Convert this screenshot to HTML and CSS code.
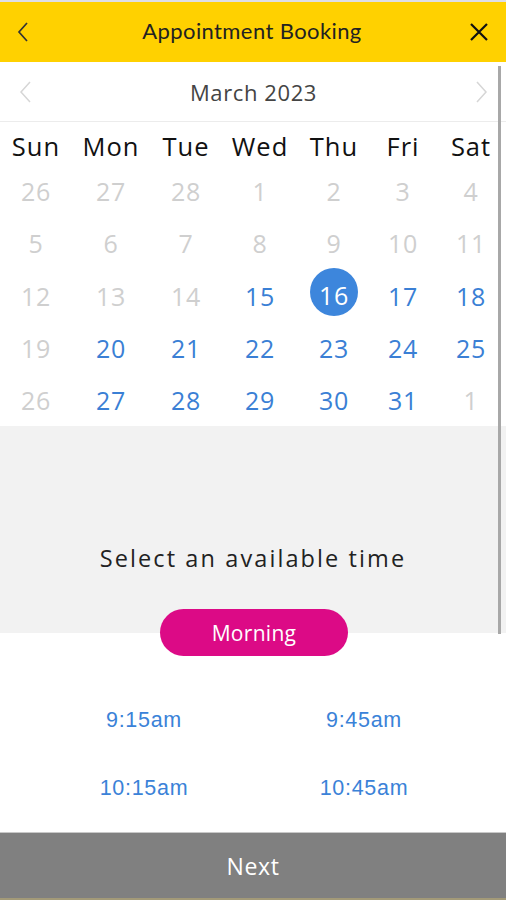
FILE: index.html
```html
<!DOCTYPE html>
<html>
<head>
<meta charset="utf-8">
<link rel="stylesheet" href="styles.css">
</head>
<body>
<div class="app">
  <div class="topline"></div>
  <header class="header">
    <span class="hicon back"><svg width="14" height="22" viewBox="0 0 14 22"><path d="M11 2 L3 11 L11 20" fill="none" stroke="#333" stroke-width="1.7"/></svg></span>
    <h1 class="title">Appointment Booking</h1>
    <span class="hicon close"><svg width="20" height="20" viewBox="0 0 20 20"><path d="M2 2 L18 18 M18 2 L2 18" fill="none" stroke="#111" stroke-width="2.2"/></svg></span>
  </header>
  <div class="month">
    <span class="mnav"><svg width="14" height="22" viewBox="0 0 14 22"><path d="M12 1 L3 11 L12 21" fill="none" stroke="#d6d6d6" stroke-width="1.5"/></svg></span>
    <span class="mlabel">March 2023</span>
    <span class="mnav"><svg width="14" height="22" viewBox="0 0 14 22"><path d="M2 1 L11 11 L2 21" fill="none" stroke="#d6d6d6" stroke-width="1.5"/></svg></span>
  </div>
  <div class="cal">
    <div class="wd">Sun</div><div class="wd">Mon</div><div class="wd">Tue</div><div class="wd">Wed</div><div class="wd">Thu</div><div class="wd">Fri</div><div class="wd">Sat</div>
    <div class="d off">26</div><div class="d off">27</div><div class="d off">28</div><div class="d off">1</div><div class="d off">2</div><div class="d off">3</div><div class="d off">4</div>
    <div class="d off">5</div><div class="d off">6</div><div class="d off">7</div><div class="d off">8</div><div class="d off">9</div><div class="d off">10</div><div class="d off">11</div>
    <div class="d off">12</div><div class="d off">13</div><div class="d off">14</div><div class="d on">15</div><div class="d sel"><span class="circle">16</span></div><div class="d on">17</div><div class="d on">18</div>
    <div class="d off">19</div><div class="d on">20</div><div class="d on">21</div><div class="d on">22</div><div class="d on">23</div><div class="d on">24</div><div class="d on">25</div>
    <div class="d off">26</div><div class="d on">27</div><div class="d on">28</div><div class="d on">29</div><div class="d on">30</div><div class="d on">31</div><div class="d off">1</div>
  </div>
  <section class="select">
    <p class="prompt">Select an available time</p>
  </section>
  <div class="pillrow"><span class="pill">Morning</span></div>
  <div class="times">
    <div class="t">9:15am</div><div class="t">9:45am</div>
    <div class="t">10:15am</div><div class="t">10:45am</div>
  </div>
  <footer class="next">Next</footer>
  <div class="scrollbar"></div>
</div>
</body>
</html>
```
FILE: styles.css
```css
html, body { margin: 0; padding: 0; }
body { background: #fff; font-family: "Open Sans", "Noto Sans", sans-serif; }
.app { position: relative; width: 506px; height: 900px; overflow: hidden; display: flex; flex-direction: column; }
.topline { height: 2px; background: #dedee6; }
.header { height: 60px; background: #ffd100; display: flex; align-items: center; justify-content: space-between; padding: 0 16px 0 12px; }
.hicon { display: flex; width: 22px; justify-content: center; }
.title { margin: 0 0 4px; font-family: Lato, "Open Sans", sans-serif; font-weight: 400; font-size: 22px; letter-spacing: 0.4px; color: #222; padding-left: 2px; }
.month { height: 59px; border-bottom: 1px solid #ececec; display: flex; align-items: center; justify-content: space-between; padding: 0 17px 0 18px; }
.mnav { display: flex; }
.mlabel { font-size: 22px; letter-spacing: 0.6px; color: #444; }
.cal { display: grid; grid-template-columns: 72px 78px 72px 76px 72px 66px 70px; grid-auto-rows: 52.25px; grid-template-rows: 43px; }
.wd { font-size: 25.5px; letter-spacing: 1px; color: #111; text-align: center; line-height: 36px; padding-top: 6px; }
.d { font-size: 25px; letter-spacing: 0.6px; text-align: center; display: flex; align-items: center; justify-content: center; }
.off { color: #cfcfcf; }
.on { color: #3a7fd5; }
.circle { width: 48px; height: 48px; border-radius: 50%; background: #3d86dc; color: #fff; display: flex; align-items: center; justify-content: center; margin-top: -8px; padding-top: 6px; box-sizing: border-box; }
.select { height: 207px; background: #f2f2f2; display: flex; align-items: flex-end; justify-content: center; }
.prompt { margin: 0 0 59px; font-size: 23.5px; letter-spacing: 2.1px; color: #222; }
.pillrow { display: flex; justify-content: center; margin-top: -24px; padding-left: 2px; }
.pill { width: 188px; height: 47px; border-radius: 24px; background: #dc0a86; color: #fff; font-size: 21px; letter-spacing: 0.3px; display: flex; align-items: center; justify-content: center; }
.times { display: grid; grid-template-columns: 220px 220px; grid-auto-rows: 68px; justify-content: center; padding: 30px 0 0 0; margin-left: 2px; }
.t { font-family: "Liberation Sans", Arial, sans-serif; font-size: 21.5px; letter-spacing: 0.7px; color: #3a82d8; display: flex; align-items: center; justify-content: center; }
.next { margin-top: auto; height: 65px; border-top: 1px solid #c8c8c8; border-bottom: 2px solid #a39a78; background: #808080; color: #fff; font-size: 23px; letter-spacing: 0.6px; display: flex; align-items: center; justify-content: center; }
.scrollbar { position: absolute; left: 498px; top: 66px; width: 3px; height: 568px; background: #a8a8a8; }
```
